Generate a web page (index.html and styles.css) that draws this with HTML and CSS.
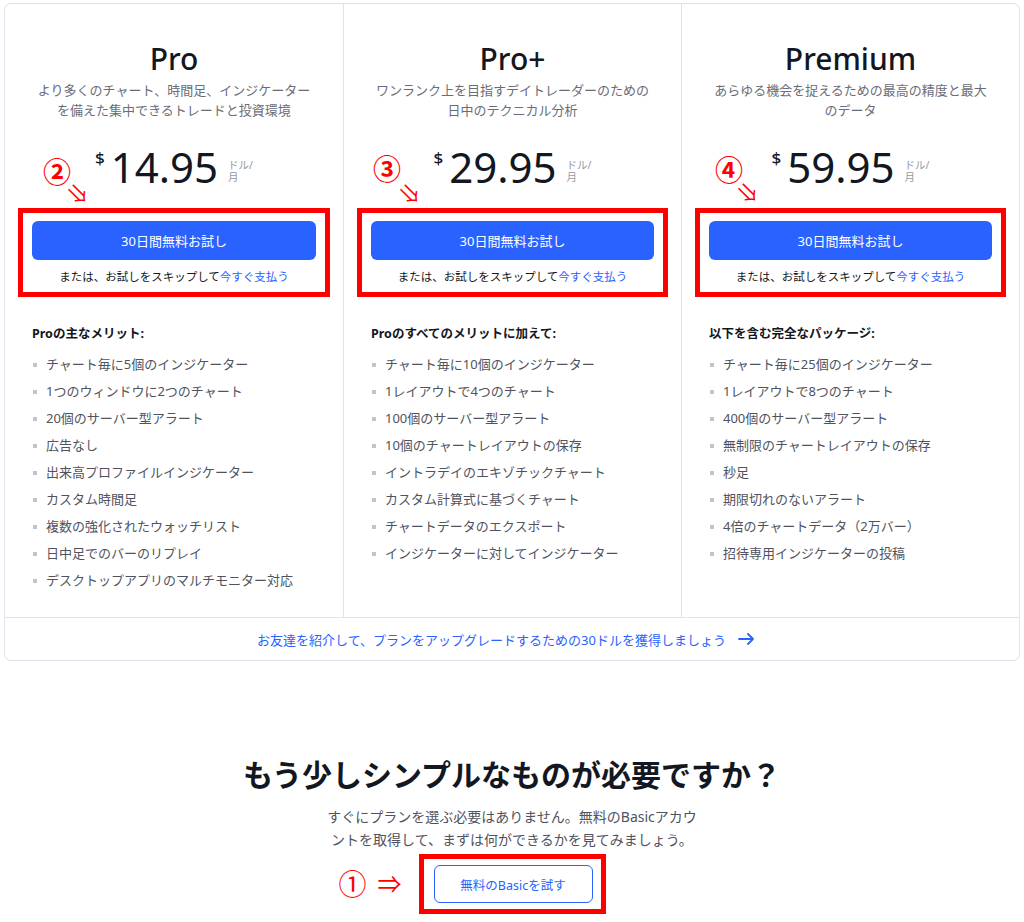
FILE: index.html
```html
<!DOCTYPE html>
<html lang="ja">
<head>
<meta charset="utf-8">
<title>プラン</title>
<link rel="stylesheet" href="styles.css">
</head>
<body>
<div class="page">
  <section class="plans">
    <div class="cols">
      <div class="col">
        <h2 class="title">Pro</h2>
        <p class="desc">より多くのチャート、時間足、インジケーター<br>を備えた集中できるトレードと投資環境</p>
        <div class="price-row">
          <span class="mark-num num-2">②</span>
          <span class="mark-arrow arr-2">⇒</span>
          <div class="price"><span class="cur">$</span><span class="amt">14.95</span><span class="per">ドル/<br>月</span></div>
        </div>
        <div class="cta">
          <button class="trial">30日間無料お試し</button>
          <p class="skip">または、お試しをスキップして<a href="#">今すぐ支払う</a></p>
        </div>
        <h3 class="feat-head">Proの主なメリット:</h3>
        <ul class="feats">
          <li>チャート毎に5個のインジケーター</li>
          <li>1つのウィンドウに2つのチャート</li>
          <li>20個のサーバー型アラート</li>
          <li>広告なし</li>
          <li>出来高プロファイルインジケーター</li>
          <li>カスタム時間足</li>
          <li>複数の強化されたウォッチリスト</li>
          <li>日中足でのバーのリプレイ</li>
          <li>デスクトップアプリのマルチモニター対応</li>
        </ul>
      </div>
      <div class="col">
        <h2 class="title">Pro+</h2>
        <p class="desc">ワンランク上を目指すデイトレーダーのための<br>日中のテクニカル分析</p>
        <div class="price-row">
          <span class="mark-num num-3">③</span>
          <span class="mark-arrow arr-3">⇒</span>
          <div class="price"><span class="cur">$</span><span class="amt">29.95</span><span class="per">ドル/<br>月</span></div>
        </div>
        <div class="cta">
          <button class="trial">30日間無料お試し</button>
          <p class="skip">または、お試しをスキップして<a href="#">今すぐ支払う</a></p>
        </div>
        <h3 class="feat-head">Proのすべてのメリットに加えて:</h3>
        <ul class="feats">
          <li>チャート毎に10個のインジケーター</li>
          <li>1レイアウトで4つのチャート</li>
          <li>100個のサーバー型アラート</li>
          <li>10個のチャートレイアウトの保存</li>
          <li>イントラデイのエキゾチックチャート</li>
          <li>カスタム計算式に基づくチャート</li>
          <li>チャートデータのエクスポート</li>
          <li>インジケーターに対してインジケーター</li>
        </ul>
      </div>
      <div class="col">
        <h2 class="title">Premium</h2>
        <p class="desc">あらゆる機会を捉えるための最高の精度と最大<br>のデータ</p>
        <div class="price-row">
          <span class="mark-num num-4">④</span>
          <span class="mark-arrow arr-4">⇒</span>
          <div class="price"><span class="cur">$</span><span class="amt">59.95</span><span class="per">ドル/<br>月</span></div>
        </div>
        <div class="cta">
          <button class="trial">30日間無料お試し</button>
          <p class="skip">または、お試しをスキップして<a href="#">今すぐ支払う</a></p>
        </div>
        <h3 class="feat-head">以下を含む完全なパッケージ:</h3>
        <ul class="feats">
          <li>チャート毎に25個のインジケーター</li>
          <li>1レイアウトで8つのチャート</li>
          <li>400個のサーバー型アラート</li>
          <li>無制限のチャートレイアウトの保存</li>
          <li>秒足</li>
          <li>期限切れのないアラート</li>
          <li>4倍のチャートデータ（2万バー）</li>
          <li>招待専用インジケーターの投稿</li>
        </ul>
      </div>
    </div>
    <a class="refer" href="#">お友達を紹介して、プランをアップグレードするための30ドルを獲得しましょう
      <svg class="refer-arrow" width="17" height="12" viewBox="0 0 17 12" aria-hidden="true"><path d="M1 6h14M10 1l5 5-5 5" fill="none" stroke="currentColor" stroke-width="1.8" stroke-linecap="round" stroke-linejoin="round"/></svg>
    </a>
  </section>

  <section class="simple">
    <h2 class="simple-title">もう少しシンプルなものが必要ですか？</h2>
    <p class="simple-text">すぐにプランを選ぶ必要はありません。無料のBasicアカウントを取得して、まずは何ができるかを見てみましょう。</p>
    <div class="basic-box">
      <span class="basic-note"><span class="note-num">①</span><span class="note-arrow">⇒</span></span>
      <button class="basic">無料のBasicを試す</button>
    </div>
  </section>
</div>
</body>
</html>
```

FILE: styles.css
```css
* { box-sizing: border-box; }
html, body { margin: 0; padding: 0; background: #fff; }
body {
  font-family: "Noto Sans", "Noto Sans CJK JP", sans-serif;
  color: #131722;
}
.page { padding: 3px 4px 0; }

.plans {
  border: 1px solid #e0e3eb;
  border-radius: 7px;
}
.cols {
  display: grid;
  grid-template-columns: 339px 338px 1fr;
}
.col {
  display: flex;
  flex-direction: column;
  align-items: center;
  padding: 37px 27px 23px;
  border-right: 1px solid #e0e3eb;
  min-width: 0;
}
.col:last-child { border-right: none; }

.title {
  margin: 0;
  font-size: 30px;
  line-height: 36px;
  font-weight: 500;
  color: #131722;
}
.desc {
  margin: 3px 0 0;
  font-size: 13px;
  line-height: 20px;
  color: #6a6d78;
  text-align: center;
}

.price-row {
  align-self: stretch;
  position: relative;
  display: flex;
  justify-content: center;
  margin-top: 26px;
}
.price {
  display: flex;
  align-items: flex-start;
  height: 42px;
}
.cur {
  font-size: 17px;
  line-height: 17px;
  margin-top: 3px;
  margin-right: 6px;
  font-weight: 500;
}
.amt {
  font-size: 42px;
  line-height: 42px;
  font-weight: 400;
  color: #131722;
}
.per {
  margin-left: 10px;
  margin-top: 13px;
  font-size: 10.5px;
  line-height: 12px;
  color: #9598a1;
}

.mark-num {
  position: absolute;
  color: #ff0000;
  font-family: "Noto Sans CJK JP", sans-serif;
  font-weight: 700;
  font-size: 28px;
  line-height: 28px;
}
.mark-arrow {
  position: absolute;
  width: 22px;
  height: 22px;
  color: #ff0000;
  font-family: "Noto Sans CJK JP", sans-serif;
  font-size: 22px;
  line-height: 22px;
  text-align: center;
  transform: rotate(45deg);
}
.num-2 { left: 11px; top: 11px; }
.arr-2 { left: 36px; top: 36px; }
.num-3 { left: 2px; top: 8px; }
.arr-3 { left: 29px; top: 36px; }
.num-4 { left: 6px; top: 9px; }
.arr-4 { left: 29px; top: 35px; }

.cta {
  align-self: stretch;
  margin: 20px -14px 0;
  border: 5px solid #ff0000;
  padding: 8px 9px 7px;
  text-align: center;
}
.trial {
  display: block;
  width: 100%;
  height: 39px;
  border: none;
  border-radius: 6px;
  background: #2962ff;
  color: #fff;
  font-family: inherit;
  font-size: 13px;
}
.skip {
  margin: 9px 0 0;
  font-size: 11.5px;
  line-height: 16px;
  color: #131722;
}
.skip a { color: #2962ff; text-decoration: none; }

.feat-head {
  align-self: stretch;
  margin: 28px 0 0;
  font-size: 12.5px;
  line-height: 18px;
  font-weight: 700;
  color: #131722;
}
.feats {
  align-self: stretch;
  list-style: none;
  margin: 8px 0 0;
  padding: 0;
}
.feats li {
  position: relative;
  padding-left: 14px;
  font-size: 13px;
  line-height: 27px;
  color: #50535e;
}
.feats li::before {
  content: "";
  position: absolute;
  left: 1px;
  top: 12px;
  width: 4px;
  height: 4px;
  background: #c1c4cd;
}

.refer {
  display: flex;
  justify-content: center;
  align-items: center;
  gap: 12px;
  height: 43px;
  border-top: 1px solid #e0e3eb;
  font-size: 13px;
  color: #2962ff;
  text-decoration: none;
  padding-right: 12px;
}
.refer-arrow { flex: none; }

.simple {
  display: flex;
  flex-direction: column;
  align-items: center;
  padding-top: 94px;
}
.simple-title {
  margin: 0;
  font-size: 30px;
  line-height: 40px;
  font-weight: 700;
  color: #131722;
}
.simple-text {
  margin: 10px 0 0;
  max-width: 378px;
  font-size: 14px;
  line-height: 23px;
  color: #50535e;
  text-align: center;
}
.basic-box {
  position: relative;
  margin-top: 3px;
  border: 5px solid #ff0000;
  padding: 6px 8px 6px 10px;
}
.basic-note {
  position: absolute;
  left: -85px;
  top: 9px;
  display: flex;
  align-items: center;
  gap: 11px;
  color: #ff0000;
  font-family: "Noto Sans CJK JP", sans-serif;
  white-space: nowrap;
}
.note-num { font-size: 28px; line-height: 30px; }
.note-arrow { font-size: 24px; line-height: 30px; }
.basic {
  display: block;
  width: 159px;
  height: 38px;
  border: 1px solid #2962ff;
  border-radius: 6px;
  background: #fff;
  color: #2962ff;
  font-family: inherit;
  font-size: 12.5px;
}
```
